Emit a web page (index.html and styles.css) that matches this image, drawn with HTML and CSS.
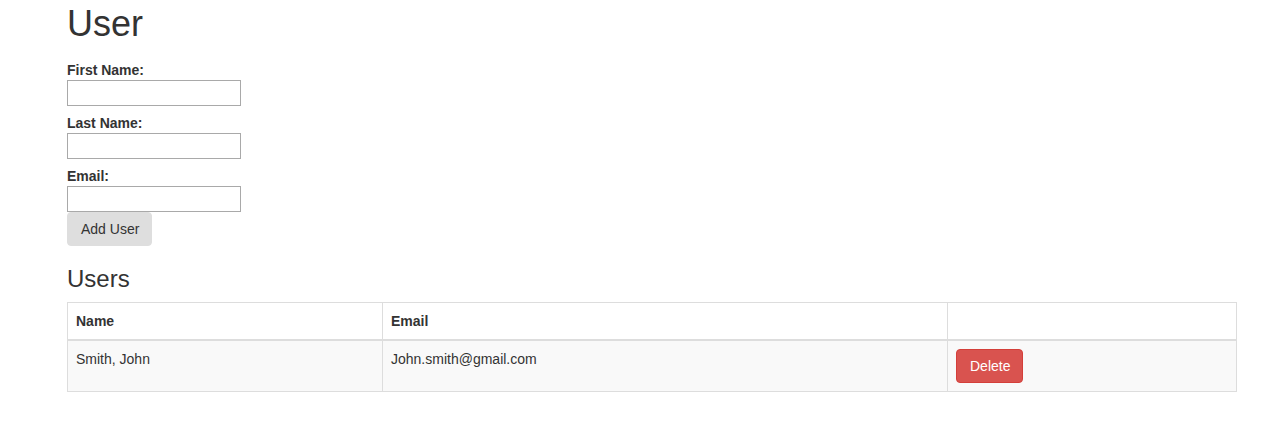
FILE: index.html
```html
<!DOCTYPE html>
<html lang="en">
<head>
    <meta charset="UTF-8">
    <meta name="viewport" content="width=device-width, initial-scale=1.0">
    <title>User</title>
    <link rel="stylesheet" href="styles.css">
</head>
<body>
    <div class="container">
        <h1 class="title">User</h1>
        <form class="user-form">
            <label for="first">First Name:</label>
            <input type="text" id="first" class="field">
            <label for="last">Last Name:</label>
            <input type="text" id="last" class="field">
            <label for="email">Email:</label>
            <input type="text" id="email" class="field">
            <button type="button" class="btn btn-add">Add User</button>
        </form>

        <h3 class="subtitle">Users</h3>
        <table class="users">
            <colgroup>
                <col class="col-name">
                <col class="col-email">
                <col class="col-action">
            </colgroup>
            <thead>
                <tr>
                    <th>Name</th>
                    <th>Email</th>
                    <th></th>
                </tr>
            </thead>
            <tbody>
                <tr>
                    <td>Smith, John</td>
                    <td>John.smith@gmail.com</td>
                    <td><button type="button" class="btn btn-danger">Delete</button></td>
                </tr>
            </tbody>
        </table>
    </div>
</body>
</html>
```

FILE: styles.css
```css
* {
    margin: 0;
    padding: 0;
    box-sizing: border-box;
}
body {
    font-family: "Liberation Sans", Arial, sans-serif;
    font-size: 14px;
    line-height: 20px;
    color: #333;
    background-color: #fff;
}
.container {
    width: 1170px;
    margin-left: 67px;
}
.title {
    font-size: 36px;
    font-weight: normal;
    line-height: 40px;
    margin: 4px 0 16px;
}
.user-form {
    display: flex;
    flex-direction: column;
    align-items: flex-start;
}
.user-form label {
    font-weight: bold;
    line-height: 20px;
}
.user-form .field + label {
    margin-top: 7px;
}
.field {
    width: 174px;
    height: 26px;
    border: 1px solid #a9a9a9;
    padding: 2px 4px;
    font: inherit;
    background-color: #fff;
}
.btn {
    font-family: inherit;
    font-size: 14px;
    line-height: 20px;
    padding: 6px 12px 6px 13px;
    border: 1px solid transparent;
    border-radius: 4px;
    cursor: pointer;
}
.btn-add {
    background-color: #dedede;
    border-color: #dedede;
    color: #333;
}
.btn-danger {
    background-color: #d9534f;
    border-color: #d43f3a;
    color: #fff;
}
.subtitle {
    font-size: 24px;
    font-weight: normal;
    line-height: 26px;
    margin: 20px 0 10px;
}
.users {
    width: 1170px;
    border-collapse: collapse;
    border: 1px solid #ddd;
}
.col-name {
    width: 315px;
}
.col-email {
    width: 565px;
}
.users th,
.users td {
    padding: 8px;
    text-align: left;
    vertical-align: top;
    border: 1px solid #ddd;
}
.users thead th {
    border-bottom: 2px solid #ddd;
    font-weight: bold;
}
.users tbody tr {
    background-color: #f9f9f9;
}
```
